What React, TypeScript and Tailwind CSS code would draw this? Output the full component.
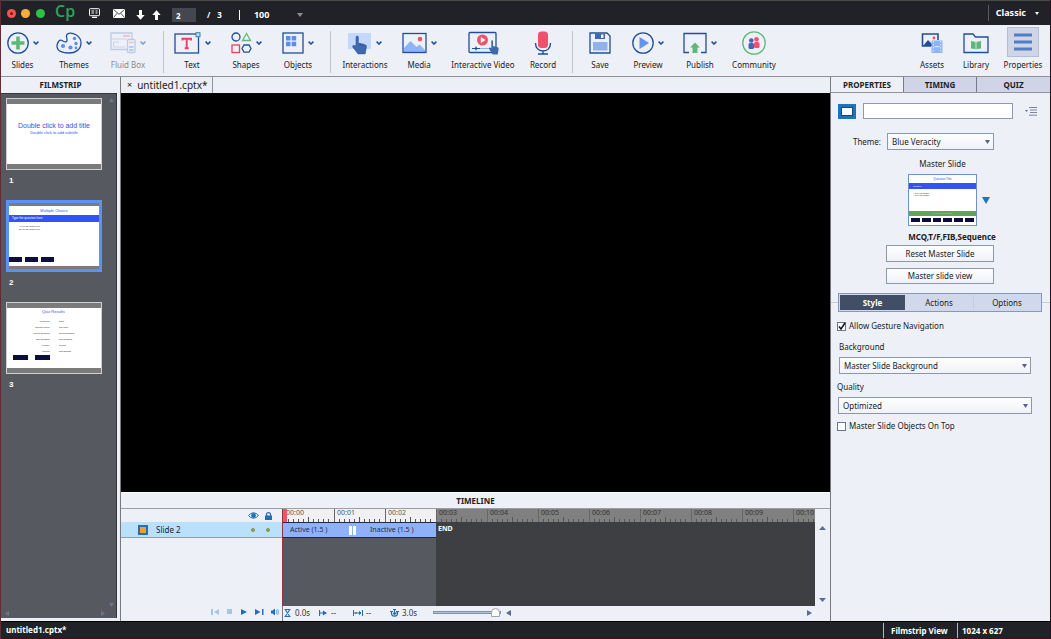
import React from 'react';

const navy = '#1f4f9c';

const Chevron = () => (
  <svg width="6" height="4" viewBox="0 0 6 4" fill="none" stroke={navy} strokeWidth="1.5">
    <path d="M0.6 0.6 L3 3 L5.4 0.6" />
  </svg>
);

const SlidesIcon = () => (
  <svg width="22" height="22" viewBox="0 0 22 22" fill="none">
    <circle cx="11" cy="11" r="10.2" stroke={navy} strokeWidth="1.3" />
    <path d="M9.200 4.500h3.600v4.700h4.700v3.600h-4.700v4.700H9.200v-4.700H4.500V9.200h4.700z" fill="#5fb87a" />
  </svg>
);

const ThemesIcon = () => (
  <svg width="26" height="22" viewBox="0 0 26 22" fill="none">
    <path d="M11 8C11 5 9 3 12 1.6C16 0 25 3 25 11C25 18 19 21 13 21C6 21 1 19 1 14C1 10 4 7 6 8.5C8 10 11 11 11 8Z" stroke={navy} strokeWidth="1.3" />
    <g fill="#5b8def">
      <circle cx="18.5" cy="6.5" r="1.7" />
      <circle cx="20" cy="11.5" r="1.7" />
      <circle cx="7" cy="14" r="2.1" />
      <circle cx="14.5" cy="15.5" r="2.1" />
      <circle cx="20" cy="16" r="1.4" />
    </g>
  </svg>
);

const FluidIcon = () => (
  <svg width="26" height="22" viewBox="0 0 26 22" fill="none" stroke="#8ea8d6" strokeWidth="1.3">
    <path d="M17 17.500H1V1h21v6" />
    <path d="M1 7h16M9 10H3.500v5H15" strokeWidth="0.8" />
    <path d="M13 4h7" stroke="#ee8b9c" strokeWidth="1.8" />
    <rect x="17.500" y="7.500" width="7.500" height="13" rx="1" fill="#eef0f7" />
    <path d="M19 10.500h4.500" stroke="#ee8b9c" />
    <path d="M19 15h4.500M19 18h4.500" stroke="#7fa9f0" strokeWidth="2" />
  </svg>
);

const TextIcon = () => (
  <svg width="27" height="22" viewBox="0 0 27 22" fill="none">
    <rect x="1" y="2" width="23.500" height="19" stroke={navy} strokeWidth="1.300" />
    <rect x="22" y="0.700" width="4" height="4" fill="#b5e2ef" stroke="#3f7fae" />
    <path d="M8.500 8.500V6.800h8.500v1.700M12.700 7V16.200M10.700 16.200h4" stroke="#ee3f5b" strokeWidth="1.900" />
  </svg>
);

const ShapesIcon = () => (
  <svg width="21" height="22" viewBox="0 0 21 22" fill="none" strokeWidth="1.300">
    <circle cx="5" cy="5" r="4" stroke={navy} />
    <path d="M15.500 1.500L19.500 8.500H11.500Z" stroke="#5fb87a" />
    <rect x="1" y="13" width="7.500" height="7.500" stroke="#ee3f5b" />
    <path d="M13 13h5l2 3.500-2 3.700h-5l-2-3.700Z" stroke={navy} />
  </svg>
);

const ObjectsIcon = () => (
  <svg width="22" height="22" viewBox="0 0 22 22" fill="none">
    <rect x="1" y="1" width="20" height="20" stroke={navy} strokeWidth="1.300" />
    <path d="M4 4h4.500v4.500H4zM9.700 4h4.500v4.500H9.700zM4 9.700h4.500v4.500H4zM9.700 9.700h4.500v4.500H9.700z" fill="#5b8def" />
  </svg>
);

const hand = 'M4 10V2.300C4 0.400 6.400 0.400 6.400 2.300V7.500L13 9C14.400 9.300 14.600 10.200 14.400 11.500L13.200 17.500H6L0.800 11.300C0.200 10 1.600 9 2.600 9.800Z';

const InteractionsIcon = () => (
  <svg width="24" height="23" viewBox="0 0 24 23">
    <rect x="0" y="1" width="23" height="16" fill="#c3d8fb" />
    <path d={hand} transform="translate(4 3) scale(1 1.080)" fill="#3f68ad" stroke="#2b569f" strokeWidth="0.500" />
    <path d="M12.300 11v3M15 11.500v3" stroke="#1f4f9c" strokeWidth="0.600" />
  </svg>
);

const MediaIcon = () => (
  <svg width="25" height="22" viewBox="0 0 25 22" fill="none">
    <path d="M2 20v-4l6.500-7 6 6 3-2.500L23 18v2z" fill="#8db4f7" />
    <circle cx="18" cy="7" r="2.300" fill="#f0516b" />
    <rect x="1" y="1.500" width="23" height="19" stroke={navy} strokeWidth="1.300" />
  </svg>
);

const VideoIcon = () => (
  <svg width="31" height="24" viewBox="0 0 31 24" fill="none">
    <rect x="1" y="1.500" width="27" height="20" rx="1" stroke={navy} strokeWidth="1.300" />
    <circle cx="14.500" cy="9" r="5.500" fill="#f0516b" />
    <path d="M12.800 6L17.500 9l-4.700 3z" fill="#fff" />
    <path d="M4 17.500h8" stroke={navy} />
    <path d="M12 17.500h10" stroke="#8db4f7" />
    <path d="M8 15.800v3.400" stroke={navy} strokeWidth="1.500" />
    <path d={hand} transform="translate(20.500 8.500) scale(0.700 0.850)" fill="#3f68ad" />
  </svg>
);

const RecordIcon = () => (
  <svg width="18" height="24" viewBox="0 0 18 24" fill="none">
    <rect x="4" y="0.500" width="10" height="16.500" rx="3.500" fill="#f0516b" />
    <path d="M1.500 12C1.500 17 4.500 20 9 20S16.500 17 16.500 12M9 20v3M4 23h10" stroke={navy} strokeWidth="1.400" />
  </svg>
);

const SaveIcon = () => (
  <svg width="22" height="22" viewBox="0 0 22 22" fill="none">
    <path d="M1 1h17l3 3v17H1z" stroke={navy} strokeWidth="1.300" />
    <path d="M6 1.500h10V7H6z" fill="#3f68ad" />
    <path d="M12 2.500h2.500V6H12z" fill="#eef0f7" />
    <path d="M4 10h14.500v8.500H4z" fill="#8fb1ee" />
  </svg>
);

const PreviewIcon = () => (
  <svg width="22" height="22" viewBox="0 0 22 22" fill="none">
    <circle cx="11" cy="11" r="10.200" stroke={navy} strokeWidth="1.300" />
    <path d="M7.500 5L17 11l-9.500 6z" fill="#6095f4" />
  </svg>
);

const PublishIcon = () => (
  <svg width="24" height="22" viewBox="0 0 24 22" fill="none">
    <path d="M6 20.500H1V1.500h22v19h-5" stroke={navy} strokeWidth="1.300" />
    <path d="M12 10.500L17 15.500h-2.500V21h-5v-5.500H7z" fill="#5fb87a" />
  </svg>
);

const CommunityIcon = () => (
  <svg width="24" height="24" viewBox="0 0 24 24">
    <circle cx="12" cy="12" r="11.200" fill="none" stroke="#5fb87a" strokeWidth="1.300" />
    <circle cx="14.500" cy="8.300" r="2.300" fill="#f0516b" />
    <rect x="12" y="11" width="5.500" height="6" rx="1.500" fill="#f0516b" />
    <circle cx="9.300" cy="9.500" r="2.300" fill="#3f68ad" />
    <rect x="6.500" y="12" width="5.500" height="6" rx="1.500" fill="#3f68ad" />
  </svg>
);

const AssetsIcon = () => (
  <svg width="22" height="22" viewBox="0 0 22 22" fill="none">
    <path d="M2 14l5-6 5 5v1z" fill={navy} />
    <path d="M10 14H1.500V2H17v6" stroke={navy} strokeWidth="1.600" />
    <circle cx="13" cy="6" r="1.400" fill="#f0516b" />
    <rect x="10.500" y="8.500" width="11" height="12.500" fill="#8db4f7" />
    <path d="M12.300 9v12M19.700 9v12" stroke="#e4edfc" strokeDasharray="1.500 1.500" />
    <path d="M13.500 14.700h5" stroke="#e4edfc" />
  </svg>
);

const LibraryIcon = () => (
  <svg width="26" height="22" viewBox="0 0 26 22" fill="none">
    <path d="M1 20.500V2h9l2.500 3H25v15.500z" stroke={navy} strokeWidth="1.300" />
    <path d="M8 9l5 1 5-1v7.500l-5 .7-5-.7z" fill="#5fb87a" />
    <path d="M13 10v7" stroke="#eef0f7" strokeWidth="0.800" />
  </svg>
);

type Tool = { label: string; width: string; icon: React.ReactNode; menu?: boolean; disabled?: boolean };

const toolGroups: Tool[][] = [
  [
    { label: 'Slides', width: 'w-[43px]', icon: <SlidesIcon />, menu: true },
    { label: 'Themes', width: 'w-15', icon: <ThemesIcon />, menu: true },
    { label: 'Fluid Box', width: 'w-12', icon: <FluidIcon />, menu: true, disabled: true },
  ],
  [
    { label: 'Text', width: 'w-10', icon: <TextIcon />, menu: true },
    { label: 'Shapes', width: 'w-17', icon: <ShapesIcon />, menu: true },
    { label: 'Objects', width: 'w-9', icon: <ObjectsIcon />, menu: true },
  ],
  [
    { label: 'Interactions', width: 'w-12', icon: <InteractionsIcon />, menu: true },
    { label: 'Media', width: 'w-15', icon: <MediaIcon />, menu: true },
    { label: 'Interactive Video', width: 'w-17', icon: <VideoIcon /> },
    { label: 'Record', width: 'w-13', icon: <RecordIcon /> },
  ],
  [
    { label: 'Save', width: 'w-12', icon: <SaveIcon /> },
    { label: 'Preview', width: 'w-12', icon: <PreviewIcon />, menu: true },
    { label: 'Publish', width: 'w-14', icon: <PublishIcon />, menu: true },
    { label: 'Community', width: 'w-13', icon: <CommunityIcon /> },
  ],
];

const groupSpacing = ['', 'ml-[11px] pl-2', 'ml-[14px] pl-[10px]', 'ml-[3px] pl-[3px]'];

function ToolButton({ tool }: { tool: Tool }) {
  return (
    <button disabled={tool.disabled} className={`flex ${tool.width} shrink-0 flex-col items-center ${tool.disabled ? 'opacity-50' : ''}`}>
      <span className="flex h-6 items-center gap-1">
        {tool.icon}
        {tool.menu && <Chevron />}
      </span>
      <span className="mt-1 text-[8px] leading-[12px] whitespace-nowrap">{tool.label}</span>
    </button>
  );
}

function TitleBar() {
  return (
    <header className="flex h-[25px] shrink-0 items-center border-t border-[#474a47] bg-[#212227] text-[9px] font-bold text-white">
      <div className="flex gap-[5px] pl-[6px]">
        <span className="flex size-[9px] items-center justify-center rounded-full bg-[#f4544d]">
          <span className="size-[3px] rounded-full bg-[#8a1210]" />
        </span>
        <span className="size-[9px] rounded-full bg-[#f6b03a]" />
        <span className="ml-px size-[9px] rounded-full bg-[#2fc142]" />
      </div>
      <span className="mb-1 ml-[10px] w-[34px] font-['Open_Sans','Noto_Sans',sans-serif] text-[16px] leading-none font-semibold text-[#2fa160]">Cp</span>
      <svg width="11" height="10" viewBox="0 0 11 10" fill="none" stroke="#fff">
        <rect x="0.500" y="0.700" width="10" height="7" rx="0.800" />
        <path d="M2.500 3h2.500M2.500 5h2.500M6.500 3h2M6.500 5h2M3 9.300h5" strokeWidth="1.200" />
      </svg>
      <svg className="ml-[13px]" width="12" height="9" viewBox="0 0 12 9">
        <path d="M0 0h12v9H0z" fill="#fff" />
        <path d="M0.500 0.500L6 5.300l5.500-4.800M0.500 8.500l3.700-4.300M11.500 8.500L7.800 4.200" fill="none" stroke="#212227" strokeWidth="0.800" />
      </svg>
      <svg className="mt-1 ml-[11px]" width="9" height="10" viewBox="0 0 9 10" fill="#fff">
        <path d="M3 0h3v5h2.700L4.500 9.700.3 5H3z" />
      </svg>
      <svg className="mt-1 ml-[7px]" width="9" height="10" viewBox="0 0 9 10" fill="#fff">
        <path d="M3 10h3V5h2.700L4.500.3.3 5H3z" />
      </svg>
      <input aria-label="Current slide" defaultValue="2" className="mt-1 ml-[11px] h-[14px] w-6 bg-[#454750] pl-1 text-[8px] font-bold outline-none" />
      <span className="mt-1 ml-[11px] text-[8px]">/</span>
      <span className="mt-1 ml-[7px] text-[8px]">3</span>
      <span className="mt-1 ml-[17px] h-[10px] w-px bg-white" />
      <span className="mt-1 ml-[14px] text-[9px]">100</span>
      <svg className="mt-1 ml-[28px]" width="6" height="4" viewBox="0 0 6 4">
        <path d="M0 0h6L3 4z" fill="#8c8e96" />
      </svg>
      <span className="ml-auto h-4 w-px bg-[#5a5c61]" />
      <button className="ml-[7px] flex items-center gap-[9px] pr-[11px]">
        Classic
        <svg width="4" height="3" viewBox="0 0 4 3">
          <path d="M0 0h4L2 3z" fill="#fff" />
        </svg>
      </button>
    </header>
  );
}

function Toolbar() {
  return (
    <nav className="flex h-[52px] shrink-0 items-start border-b border-[#8f9197] bg-[#eef0f7] pt-[6px]">
      {toolGroups.map((group, i) => (
        <div key={i} className={`flex ${groupSpacing[i]} ${i > 0 ? 'h-[42px] border-l border-[#bfc1c9]' : ''}`}>
          {group.map((tool) => (
            <ToolButton key={tool.label} tool={tool} />
          ))}
        </div>
      ))}
      <div className="ml-auto flex pr-[2px]">
        <ToolButton tool={{ label: 'Assets', width: 'w-11', icon: <AssetsIcon /> }} />
        <ToolButton tool={{ label: 'Library', width: 'w-11', icon: <LibraryIcon /> }} />
        <button className="flex w-[50px] flex-col items-center">
          <span className="-mt-1 flex h-[30px] w-8 items-center justify-center border border-[#b3bed6] bg-[#cfd5e6]">
            <svg width="18" height="20" viewBox="0 0 18 20" stroke="#507dc5" strokeWidth="3">
              <path d="M0 3h18M0 10h18M0 17h18" />
            </svg>
          </span>
          <span className="mt-[2px] text-[8px] leading-[12px]">Properties</span>
        </button>
      </div>
    </nav>
  );
}

function Thumb({ number, active, children }: { number: number; active?: boolean; children: React.ReactNode }) {
  return (
    <li className="h-[102px]">
      <button className={`flex h-[72px] w-24 flex-col bg-white text-left ${active ? 'border-3 border-[#5b93f5]' : 'border border-[#d0d0d0]'}`}>
        <span className={`w-full shrink-0 bg-[#7b7b7b] ${active ? 'h-[3px]' : 'h-[5px]'}`} />
        <span className="flex w-full grow flex-col">{children}</span>
        <span className={`w-full shrink-0 bg-[#7b7b7b] ${active ? 'h-[3px]' : 'h-[5px]'}`} />
      </button>
      <div className="mt-[5px] pl-[3px] text-[8px] leading-[12px] font-bold text-white">{number}</div>
    </li>
  );
}

const results = [
  ['You Scored:', 'score'],
  ['Maximum Score:', 'max-score'],
  ['Correct Questions:', 'correct-questions'],
  ['Total Questions:', 'total-questions'],
  ['Accuracy:', 'percent'],
  ['Attempts:', 'total-attempts'],
];

function Filmstrip() {
  return (
    <aside className="flex w-[120px] shrink-0 flex-col border-r border-[#77797f] bg-[#eef0f7]">
      <h2 className="h-4 shrink-0 text-center text-[8px] leading-4 font-bold">FILMSTRIP</h2>
      <div className="relative mr-[3px] mb-[3px] grow border-t border-r border-[#35373d] bg-[#565960] pt-1 pl-[5px]">
        <ul className="font-['Liberation_Sans',sans-serif]">
          <Thumb number={1}>
            <span className="mt-[18px] text-center text-[7px] leading-[8px] whitespace-nowrap text-[#3453f5]">Double click to add title</span>
            <span className="text-center text-[4px] leading-[6px] text-[#3453f5]">Double click to add subtitle</span>
          </Thumb>
          <Thumb number={2} active>
            <span className="mt-px text-center text-[4px] leading-[8px] text-[#3453f5]">Multiple Choice</span>
            <span className="h-[7px] bg-[#3453f5] pl-[3px] text-[3px] leading-[7px] text-white">Type the question here</span>
            <span className="mt-[3px] pl-[10px] text-[2px] leading-[3px]">A) type the answer here</span>
            <span className="pl-[10px] text-[2px] leading-[3px]">B) type the answer here</span>
            <span className="mt-auto mb-1 flex gap-[3px]">
              <i className="h-[5px] w-[13px] bg-[#0c0d3d]" />
              <i className="h-[5px] w-[13px] bg-[#0c0d3d]" />
              <i className="h-[5px] w-[13px] bg-[#0c0d3d]" />
            </span>
          </Thumb>
          <Thumb number={3}>
            <span className="mb-[3px] pl-[35px] text-[4px] leading-[7px] text-[#3453f5]">Quiz Results</span>
            {results.map(([label, value]) => (
              <span key={label} className="flex text-[2px] leading-[6px] whitespace-nowrap">
                <span className="w-[43px] text-right">{label}</span>
                <span className="ml-[9px]">{value}</span>
              </span>
            ))}
            <span className="mt-px flex gap-[7px] pl-[6px]">
              <i className="h-[5px] w-[15px] bg-[#0c0d3d]" />
              <i className="h-[5px] w-[15px] bg-[#0c0d3d]" />
            </span>
          </Thumb>
        </ul>
        <svg className="absolute top-1 right-[2px]" width="5" height="4"><path d="M0 4h5L2.500 0z" fill="#6c7796" /></svg>
        <svg className="absolute right-[2px] bottom-[11px]" width="5" height="4"><path d="M0 0h5L2.500 4z" fill="#6c7796" /></svg>
        <svg className="absolute bottom-[2px] left-1" width="4" height="5"><path d="M4 0v5L0 2.500z" fill="#6c7796" /></svg>
        <svg className="absolute right-[11px] bottom-[2px]" width="4" height="5"><path d="M0 0v5l4-2.500z" fill="#6c7796" /></svg>
      </div>
    </aside>
  );
}

const seconds = ['00:00', '00:01', '00:02', '00:03', '00:04', '00:05', '00:06', '00:07', '00:08', '00:09', '00:10'];

function Ruler() {
  return (
    <div className="flex h-[13px] shrink-0 overflow-hidden bg-[#808080]">
      {seconds.map((time, i) => (
        <div key={time} className={`h-full w-[51px] shrink-0 border-l border-[#666] pl-[2px] text-[7px] leading-[8px] ${i < 3 ? 'bg-[#f1f1f1] text-[#555]' : 'text-[#333]'}`}>
          {time}
          <svg className="block" width="48" height="5" viewBox="0 0 48 5" stroke="#555">
            <path d="M2.500 2v3M7.500 2v3M12.500 2v3M17.500 2v3M22.500 0v5M27.500 2v3M32.500 2v3M37.500 2v3M42.500 2v3" />
          </svg>
        </div>
      ))}
    </div>
  );
}

function Timeline() {
  return (
    <section className="flex h-[129px] shrink-0 flex-col bg-[#eef0f7]">
      <h2 className="h-[17px] shrink-0 border-t border-b border-t-white border-b-[#9c9ea4] text-center text-[8px] leading-[15px] font-bold">TIMELINE</h2>
      <div className="flex min-h-0 grow">
        <div className="flex w-[161px] shrink-0 flex-col">
          <div className="flex h-[13px] shrink-0 items-center justify-end gap-[6px] pr-[10px]">
            <svg width="11" height="7" viewBox="0 0 11 7">
              <path d="M0.500 3.500Q5.500-2 10.500 3.500Q5.500 9 0.500 3.500Z" fill="#fff" stroke="#246eb5" />
              <circle cx="5.500" cy="3.500" r="2.400" fill="#246eb5" />
            </svg>
            <svg width="7" height="8" viewBox="0 0 7 8">
              <path d="M0 3.500h7V8H0z" fill="#246eb5" />
              <path d="M1.500 4V2.500Q1.500.7 3.500.7T5.500 2.500V4" fill="none" stroke="#246eb5" strokeWidth="1.200" />
            </svg>
          </div>
          <div className="flex h-[16px] shrink-0 items-center border-b border-[#999ca3] bg-[#bae1fb] pl-[17px] text-[8px]">
            <span className="size-[10px] border-2 border-[#246eb5] bg-[#eba324]" />
            <span className="ml-[8px]">Slide 2</span>
            <span className="ml-auto size-1 rounded-full border border-[#7b9552] bg-[#b59b35]" />
            <span className="mr-3 ml-[11px] size-1 rounded-full border border-[#7b9552] bg-[#b59b35]" />
          </div>
          <div className="mt-auto flex h-[15px] items-center justify-end gap-[8px] pr-[3px] pb-1">
            <svg width="8" height="6" fill="#a6c6e0"><path d="M0 0h2v6H0zM8 0v6L3 3z" /></svg>
            <svg width="5" height="5" fill="#a6c6e0"><path d="M0 0h5v5H0z" /></svg>
            <svg className="ml-px" width="6" height="6" fill="#246eb5"><path d="M0 0v6l6-3z" /></svg>
            <svg width="9" height="6" fill="#246eb5"><path d="M0 0v6l5.500-3zM7 0h1.500v6H7z" /></svg>
            <svg className="-ml-px" width="8" height="8" viewBox="0 0 8 8" fill="#246eb5">
              <path d="M0 2.500h1.500L4 .5v7L1.500 5.500H0z" />
              <path d="M5.200 2q1.300 2 0 4M6.500 1q2 3 0 6" fill="none" stroke="#5b93c7" strokeWidth="0.800" />
            </svg>
          </div>
        </div>
        <div className="flex min-w-0 grow flex-col">
          <div className="relative flex min-h-0 grow flex-col border-l border-[#96343e] bg-[#3e3f43]">
            <Ruler />
            <span className="absolute top-0 left-0 h-[13px] w-1 bg-[#ee5367]" />
            <div className="flex min-h-0 grow text-[7px]">
              <div className="w-[153px] shrink-0 bg-[#565960]">
                <div className="flex h-[16px] items-center border-t border-b border-[#222b45] bg-[#8fb1fa] text-[#1c2a4d]">
                  <span className="w-[66px] pl-[7px] whitespace-nowrap">Active (1.5 )</span>
                  <span className="h-[9px] w-[7px] border-r-3 border-l-3 border-white" />
                  <span className="ml-[14px] whitespace-nowrap">Inactive (1.5 )</span>
                </div>
              </div>
              <span className="pt-[2px] pl-[2px] leading-[10px] font-bold text-white">END</span>
            </div>
          </div>
          <div className="flex h-[15px] shrink-0 items-center border-l border-[#77797f] pb-[2px] text-[8px] text-[#35373d]">
            <svg className="ml-px" width="7" height="8" viewBox="0 0 7 8" fill="none" stroke="#246eb5">
              <path d="M0.500 0.500h6M0.500 7.500h6M1.500 1L5.500 7M5.500 1L1.500 7" strokeWidth="1.200" />
            </svg>
            <span className="ml-[4px] w-6">0.0s</span>
            <svg width="8" height="6" stroke="#246eb5" fill="#246eb5"><path d="M0.500 0v6M1 3h6M4.500 1.500v3L7 3z" strokeWidth="1.200" /></svg>
            <span className="ml-[4px] w-[22px]">--</span>
            <svg width="10" height="6" stroke="#246eb5" fill="#246eb5"><path d="M0.500 0v6M9.500 0v6M1 3h7M3 2v2M6.500 1.500v3L8 3z" /></svg>
            <span className="ml-[3px] w-6">--</span>
            <svg width="9" height="8" viewBox="0 0 9 8" fill="none" stroke="#246eb5">
              <path d="M1.500 3Q1 7.200 4.500 7.200T7.500 3M4.500 0v5M3 .5h3M0 2.500h3M6 2.500h3M3 4l1.500 1.500L6.500 3.500" strokeWidth="1.200" />
            </svg>
            <label className="ml-[3px] w-[31px]" htmlFor="zoom">3.0s</label>
            <input
              id="zoom"
              type="range"
              defaultValue={100}
              className="h-[9px] w-[68px] appearance-none bg-transparent [&::-webkit-slider-runnable-track]:h-[3px] [&::-webkit-slider-runnable-track]:border [&::-webkit-slider-runnable-track]:border-[#8492ab] [&::-webkit-slider-runnable-track]:bg-[#b1bed2] [&::-webkit-slider-thumb]:-mt-1 [&::-webkit-slider-thumb]:h-[9px] [&::-webkit-slider-thumb]:w-[9px] [&::-webkit-slider-thumb]:appearance-none [&::-webkit-slider-thumb]:rounded-t-full [&::-webkit-slider-thumb]:border [&::-webkit-slider-thumb]:border-[#a3a5ab] [&::-webkit-slider-thumb]:bg-white"
            />
            <svg className="ml-[5px]" width="5" height="6" fill="#596c91"><path d="M5 0v6L0 3z" /></svg>
            <svg className="mr-[3px] ml-auto" width="5" height="6" fill="#596c91"><path d="M0 0v6l5-3z" /></svg>
          </div>
        </div>
        <div className="flex w-[15px] shrink-0 flex-col items-center justify-between pt-[17px] pb-[19px]">
          <svg width="7" height="4" fill="#596c91"><path d="M0 4h7L3.500 0z" /></svg>
          <svg width="7" height="4" fill="#596c91"><path d="M0 0h7L3.500 4z" /></svg>
        </div>
      </div>
    </section>
  );
}

function Stage() {
  return (
    <main className="flex min-w-0 grow flex-col border-r border-[#77797f] bg-[#ecf0f6]">
      <div className="flex h-4 shrink-0">
        <button className="flex items-center gap-[5px] border-r border-[#92949b] pr-[5px] pl-[6px] text-[10px] leading-4">
          <span className="text-[9px]">×</span>
          <span>untitled1.cptx*</span>
        </button>
      </div>
      <div className="min-h-0 grow bg-black" />
      <Timeline />
    </main>
  );
}

const SelectBox = ({ id, value, className, width }: { id: string; value: string; className?: string; width: string }) => (
  <div className={`relative h-[17px] ${width} ${className ?? ''}`}>
    <select id={id} defaultValue={value} className="block h-full w-full appearance-none border border-[#8b98b0] bg-linear-to-b from-white to-[#f0f2f8] pl-1 text-[8px] leading-[14px] outline-none">
      <option>{value}</option>
    </select>
    <svg className="pointer-events-none absolute top-[7px] right-1" width="5" height="4" fill="#53648a">
      <path d="M0 0h5L2.500 4z" />
    </svg>
  </div>
);

function Properties() {
  return (
    <aside className="flex w-[219px] shrink-0 flex-col bg-[#eef0f7] text-[8px]">
      <div className="flex h-4 shrink-0 border-b border-[#8f929b] text-center leading-[15px] font-bold">
        <button className="w-[72px]">PROPERTIES</button>
        <button className="w-[73px] border-l border-[#777b88] bg-[#cfd5e6]">TIMING</button>
        <button className="grow border-l border-[#777b88] bg-[#cfd5e6]">QUIZ</button>
      </div>
      <div className="mt-[10px] flex h-4 items-center pl-[7px]">
        <button aria-label="Slide" className="flex h-[15px] w-[18px] items-center justify-center bg-[#2073b9]">
          <span className="h-[9px] w-3 border border-[#0c4c83] bg-white" />
        </button>
        <input aria-label="Slide name" className="ml-[7px] h-4 w-[150px] border border-[#8b98b0] bg-white px-1 outline-none" />
        <svg className="ml-3" width="12" height="9" viewBox="0 0 12 9">
          <path d="M0 3h3L1.500 5z" fill="#596c91" />
          <path d="M4 .5h8M5 3h7M5 5.500h7M4 8.200h8" stroke="#7b869c" />
        </svg>
      </div>
      <div className="mt-[14px] flex items-center">
        <label htmlFor="theme" className="w-[56px] pr-[6px] text-right">Theme:</label>
        <SelectBox id="theme" value="Blue Veracity" width="w-[107px]" />
      </div>
      <div className="mt-[8px] w-[223px] text-center leading-[12px]">Master Slide</div>
      <div className="mt-[4px] flex items-center gap-[5px] pl-[77px]">
        <div className="flex h-[52px] w-[69px] flex-col border border-[#6f92c5] bg-white font-['Liberation_Sans',sans-serif]">
          <span className="h-2 text-center text-[3px] leading-[9px] text-[#3453f5]">Question Title</span>
          <span className="h-[6px] bg-[#3453f5] pl-1 text-[2px] leading-[6px] text-white">Question</span>
          <span className="mt-[3px] pl-1 text-[2px] leading-[2px]">○ Type the answer</span>
          <span className="pl-1 text-[2px] leading-[2px]">○ Type the answer</span>
          <span className="mt-auto h-[5px] bg-[#62a35a] text-center text-[2px] leading-[5px] text-[#e1c37b]">Review Area message</span>
          <span className="mt-[2px] mb-[3px] flex gap-[2px] px-[2px]">
            {[1, 2, 3, 4, 5, 6].map((n) => (
              <i key={n} className="h-[4px] grow bg-[#0c0d3d]" />
            ))}
          </span>
        </div>
        <button aria-label="Choose master slide">
          <svg width="8" height="7" fill="#2073b9"><path d="M0 0h8L4 7z" /></svg>
        </button>
      </div>
      <div className="mt-[5px] w-[242px] text-center leading-[12px] font-bold">MCQ,T/F,FIB,Sequence</div>
      <button className="mt-[2px] ml-[55px] h-[17px] w-[108px] border border-[#8b98b0] bg-linear-to-b from-white to-[#f0f2f8]">Reset Master Slide</button>
      <button className="mt-[6px] ml-[55px] h-4 w-[108px] border border-[#8b98b0] bg-linear-to-b from-white to-[#f0f2f8]">Master slide view</button>
      <div className="mt-[9px] flex items-center">
        <span className="h-px w-[7px] bg-[#cbcdd3]" />
        <div className="flex h-[19px] w-[204px] border border-[#8598bd] bg-[#d2d8eb] p-px">
          <button className="w-[65px] bg-[#424e65] font-bold text-white">Style</button>
          <button className="w-[69px] border-r border-[#c5cde2]">Actions</button>
          <button className="grow">Options</button>
        </div>
        <span className="h-px grow bg-[#cbcdd3]" />
      </div>
      <label className="mt-2 flex h-3 items-center gap-[3px] pl-[6px]">
        <span className="relative flex size-[9px]">
          <input type="checkbox" defaultChecked className="peer size-[9px] appearance-none border border-[#687796] bg-white" />
          <svg className="absolute inset-0 hidden peer-checked:block" width="9" height="9" fill="none" stroke="#111" strokeWidth="1.500">
            <path d="M2 4.500l2 2.500 4-6" />
          </svg>
        </span>
        Allow Gesture Navigation
      </label>
      <label htmlFor="background" className="mt-[9px] pl-2 leading-[12px]">Background</label>
      <SelectBox id="background" value="Master Slide Background" width="w-[192px]" className="mt-1 ml-2" />
      <label htmlFor="quality" className="mt-[7px] pl-[6px] leading-[12px]">Quality</label>
      <SelectBox id="quality" value="Optimized" width="w-[194px]" className="mt-1 ml-[7px]" />
      <label className="mt-[6px] flex h-3 items-center gap-[3px] pl-[6px]">
        <input type="checkbox" className="size-[9px] appearance-none border border-[#687796] bg-white" />
        Master Slide Objects On Top
      </label>
    </aside>
  );
}

export default function App() {
  return (
    <div className="flex h-screen flex-col overflow-hidden border-r border-l border-r-[#280d25] border-l-[#612c34] bg-[#eef0f7] font-['Noto_Sans','Open_Sans',sans-serif] text-[#202126]">
      <TitleBar />
      <Toolbar />
      <div className="flex min-h-0 grow">
        <Filmstrip />
        <Stage />
        <Properties />
      </div>
      <footer className="flex h-[18px] shrink-0 items-center border-t border-b border-t-black border-b-[#430d1a] bg-[#212227] text-[8px] font-bold text-white">
        <span className="pl-[5px]">untitled1.cptx*</span>
        <span className="ml-auto w-[74px] border-l border-[#b5b7bb] pl-[7px] leading-[15px]">Filmstrip View</span>
        <span className="w-[93px] border-l border-[#b5b7bb] pl-1 leading-[15px]">1024 x 627</span>
      </footer>
    </div>
  );
}
